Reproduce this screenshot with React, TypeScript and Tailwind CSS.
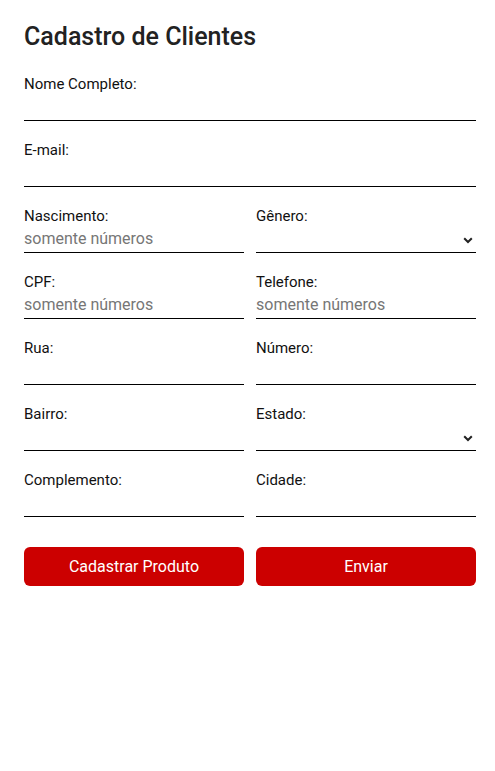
import React from "react";

const Chevron = () => (
  <svg width="10" height="7" viewBox="0 0 10 7" className="absolute right-[3px] top-[12px]">
    <path d="M1.2 1.2 L5 5 L8.8 1.2" fill="none" stroke="#222" strokeWidth="2" />
  </svg>
);

function Field({ label, placeholder, select }: { label: string; placeholder?: string; select?: boolean }) {
  return (
    <div className="flex flex-col">
      <label className="text-[15px] leading-[18px] text-[#111]">{label}</label>
      <div className="relative h-[28px] border-b border-black">
        {select ? (
          <>
            <div className="h-full" />
            <Chevron />
          </>
        ) : (
          <input
            className="h-full w-full bg-transparent text-[16px] text-[#111] outline-none placeholder:text-[#767676]"
            placeholder={placeholder}
          />
        )}
      </div>
    </div>
  );
}

export default function App() {
  return (
    <div className="min-h-[771px] bg-white pl-6 pr-[19px] pt-[21px]" style={{ fontFamily: "Roboto, 'Liberation Sans', sans-serif" }}>
      <h1 className="text-[25px] font-medium leading-[32px] text-[#222]">Cadastro de Clientes</h1>
      <div className="mt-[22px] flex flex-col gap-5">
        <Field label="Nome Completo:" />
        <Field label="E-mail:" />
        <div className="grid grid-cols-2 gap-x-3 gap-y-5">
          <Field label="Nascimento:" placeholder="somente números" />
          <Field label="Gênero:" select />
          <Field label="CPF:" placeholder="somente números" />
          <Field label="Telefone:" placeholder="somente números" />
          <Field label="Rua:" />
          <Field label="Número:" />
          <Field label="Bairro:" />
          <Field label="Estado:" select />
          <Field label="Complemento:" />
          <Field label="Cidade:" />
        </div>
      </div>
      <div className="mt-[30px] grid grid-cols-2 gap-x-3">
        <button className="h-[39px] rounded-[6px] bg-[#cc0000] text-[16px] text-white">Cadastrar Produto</button>
        <button className="h-[39px] rounded-[6px] bg-[#cc0000] text-[16px] text-white">Enviar</button>
      </div>
    </div>
  );
}
